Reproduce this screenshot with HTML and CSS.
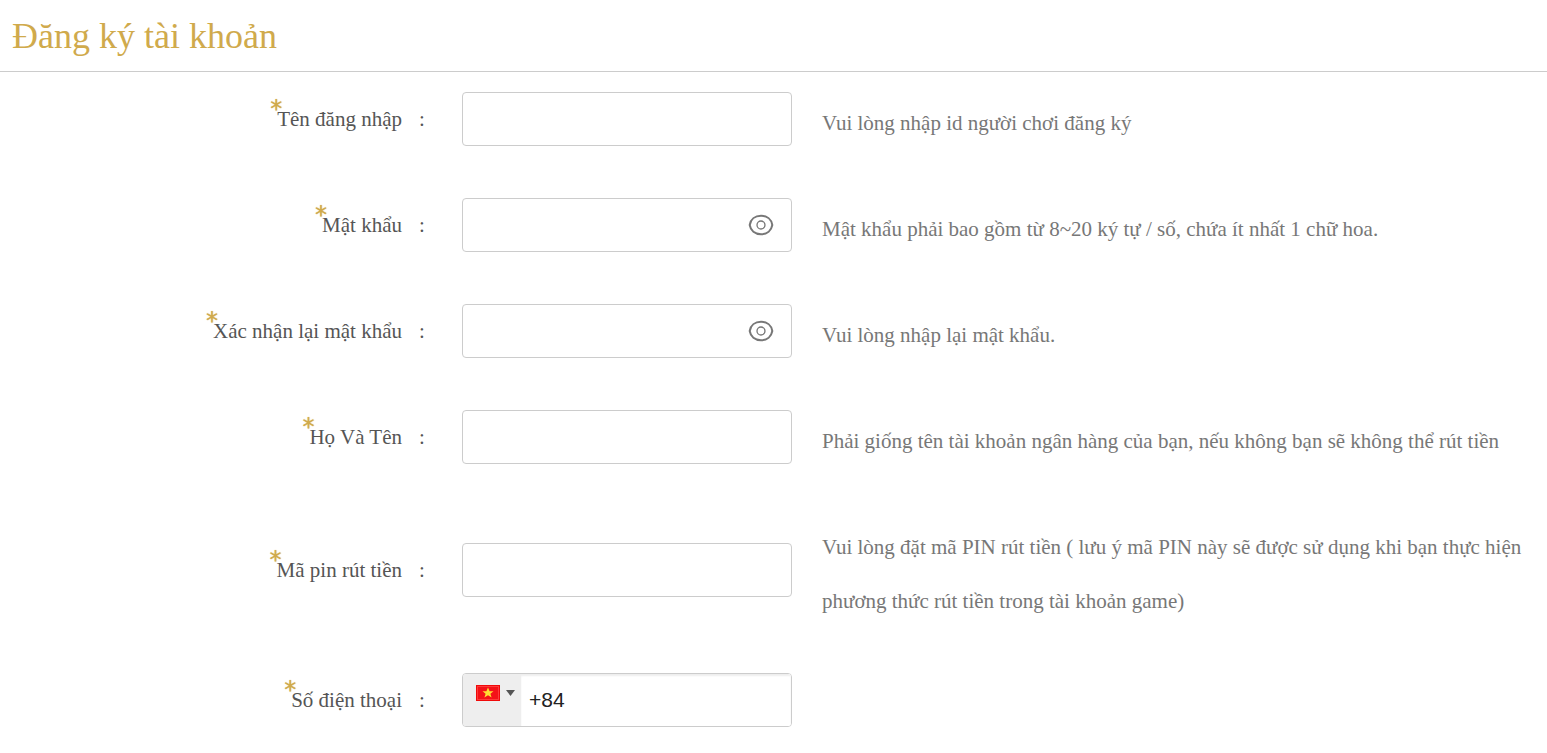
FILE: index.html
```
<!DOCTYPE html>
<html lang="vi">
<head>
<meta charset="utf-8">
<meta name="viewport" content="width=device-width, initial-scale=1">
<title>Đăng ký tài khoản</title>
<link rel="stylesheet" href="styles.css">
</head>
<body>
<h1 class="heading">Đăng ký tài khoản</h1>
<form class="register">
  <div class="row">
    <label for="username"><span class="star">*</span>Tên đăng nhập</label>
    <span class="colon">:</span>
    <div class="field"><input type="text" id="username"></div>
    <p class="hint">Vui lòng nhập id người chơi đăng ký</p>
  </div>
  <div class="row">
    <label for="pwd"><span class="star">*</span>Mật khẩu</label>
    <span class="colon">:</span>
    <div class="field">
      <input type="password" id="pwd">
      <button type="button" class="eye" aria-label="Hiện mật khẩu">
        <svg width="26" height="22" viewBox="0 0 26 22"><path d="M1.700 11C2.600 5.500 7 1.800 13 1.800S23.400 5.500 24.300 11C23.400 16.500 19 20.200 13 20.200S2.600 16.500 1.700 11z"/><circle cx="13" cy="11" r="4"/></svg>
      </button>
    </div>
    <p class="hint">Mật khẩu phải bao gồm từ 8~20 ký tự / số, chứa ít nhất 1 chữ hoa.</p>
  </div>
  <div class="row">
    <label for="pwd2"><span class="star">*</span>Xác nhận lại mật khẩu</label>
    <span class="colon">:</span>
    <div class="field">
      <input type="password" id="pwd2">
      <button type="button" class="eye" aria-label="Hiện mật khẩu">
        <svg width="26" height="22" viewBox="0 0 26 22"><path d="M1.700 11C2.600 5.500 7 1.800 13 1.800S23.400 5.500 24.300 11C23.400 16.500 19 20.200 13 20.200S2.600 16.500 1.700 11z"/><circle cx="13" cy="11" r="4"/></svg>
      </button>
    </div>
    <p class="hint">Vui lòng nhập lại mật khẩu.</p>
  </div>
  <div class="row">
    <label for="fullname"><span class="star">*</span>Họ Và Tên</label>
    <span class="colon">:</span>
    <div class="field"><input type="text" id="fullname"></div>
    <p class="hint">Phải giống tên tài khoản ngân hàng của bạn, nếu không bạn sẽ không thể rút tiền</p>
  </div>
  <div class="row">
    <label for="pin"><span class="star">*</span>Mã pin rút tiền</label>
    <span class="colon">:</span>
    <div class="field"><input type="text" id="pin"></div>
    <p class="hint">Vui lòng đặt mã PIN rút tiền ( lưu ý mã PIN này sẽ được sử dụng khi bạn thực hiện phương thức rút tiền trong tài khoản game)</p>
  </div>
  <div class="row">
    <label for="phone"><span class="star">*</span>Số điện thoại</label>
    <span class="colon">:</span>
    <div class="field phone">
      <button type="button" class="country" aria-label="Việt Nam">
        <svg width="24" height="16" viewBox="0 0 24 16"><rect width="24" height="16" fill="#f00a0a"/><rect x="1" y="1" width="22" height="14" fill="#ff3a3a"/><rect x="2" y="2" width="20" height="12" fill="#f41218"/><path d="M12 2.500l1.600 3.700h3.900l-3.100 2.500 1.200 3.900-3.600-2.300-3.600 2.300 1.200-3.900-3.100-2.500h3.900z" fill="#fd3"/></svg>
        <svg width="9" height="6" viewBox="0 0 9 6"><path d="M0 0h9L4.500 6z" fill="#555"/></svg>
      </button>
      <input type="tel" id="phone" value="+84">
    </div>
  </div>
</form>
</body>
</html>
```
FILE: styles.css
```
* {
  box-sizing: border-box;
}
body {
  margin: 0;
  background: #fff;
  font-family: "Liberation Serif", "Times New Roman", serif;
  font-size: 21px;
}
.heading {
  margin: 0;
  padding: 0 12px;
  height: 72px;
  line-height: 72px;
  border-bottom: 1px solid #ccc;
  color: #d0aa4c;
  font-size: 36px;
  font-weight: normal;
}
.register {
  display: flex;
  flex-direction: column;
  gap: 44px;
  padding-top: 16px;
}
.row {
  display: grid;
  grid-template-columns: 402px 60px 330px 1fr;
  align-items: center;
  min-height: 56px;
}
.row label {
  text-align: right;
  color: #555;
}
.star {
  margin-right: -5px;
  vertical-align: 9px;
  line-height: 0;
  color: #d0aa4c;
  font-family: "DejaVu Sans", sans-serif;
  font-size: 24px;
  text-shadow: 0 0 1px #d0aa4c;
}
.colon {
  padding-left: 17px;
  color: #555;
}
.field {
  position: relative;
}
.field input {
  display: block;
  width: 100%;
  height: 54px;
  padding: 0 8px;
  border: 1px solid #ccc;
  border-radius: 4px;
  background: #fff;
  color: #222;
  font: 21px "Liberation Sans", Arial, sans-serif;
}
.eye {
  position: absolute;
  right: 18px;
  top: 16px;
  padding: 0;
  border: 0;
  background: none;
  line-height: 0;
}
.eye svg {
  fill: none;
  stroke: #777;
  stroke-width: 2;
}
.eye circle {
  stroke-width: 1.3;
}
.hint {
  margin: 0;
  padding: 8px 20px 0 30px;
  color: #777;
  line-height: 54px;
}
.phone {
  display: flex;
  height: 54px;
  border: 1px solid #ccc;
  border-radius: 4px;
  overflow: hidden;
}
.country {
  display: flex;
  align-items: flex-start;
  gap: 6px;
  width: 58px;
  padding: 11px 0 0 13px;
  border: 0;
  background: #eee;
}
.country svg:last-child {
  margin-top: 5px;
}
.field.phone input {
  flex: 1;
  min-width: 0;
  height: 52px;
  border: 0;
  border-radius: 0;
  box-shadow: inset 0 2px 2px #eee;
}
```
